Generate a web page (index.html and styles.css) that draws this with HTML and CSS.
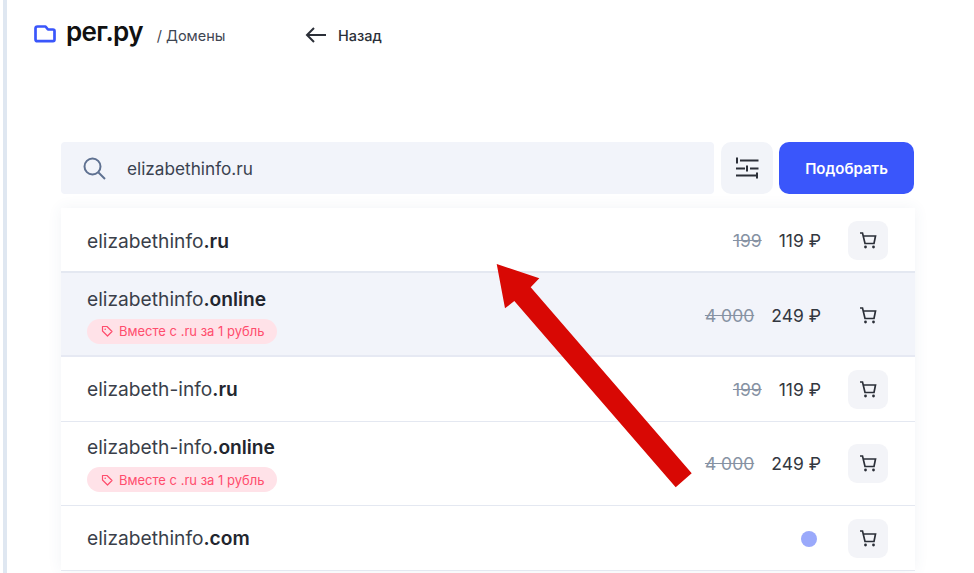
FILE: index.html
```html
<!DOCTYPE html>
<html lang="ru">
<head>
<meta charset="utf-8">
<title>рег.ру / Домены</title>
<link rel="stylesheet" href="styles.css">
</head>
<body>
<div class="page">
  <header class="header">
    <div class="brand">
      <svg class="logo-icon" viewBox="0 0 22 18" width="22" height="18" fill="none"><path d="M1.500 3.500C1.500 2.400 2.400 1.500 3.500 1.500H11.500L14 4.500H19C20 4.500 20.500 5.200 20.500 6V14.500C20.500 15.500 19.800 16.200 19 16.200H3.500C2.400 16.200 1.500 15.300 1.500 14.200Z" stroke="#3a56fb" stroke-width="2.700" stroke-linejoin="round"/></svg>
      <span class="logo-text">рег.ру</span>
      <span class="crumb">/ Домены</span>
    </div>
    <a class="back">
      <svg viewBox="0 0 22 16" width="22" height="16" fill="none"><path d="M21 8H2M9 1L2 8L9 15" stroke="#2b2f38" stroke-width="2"/></svg>
      <span>Назад</span>
    </a>
  </header>
  <main class="main">
    <div class="search-row">
      <div class="search">
        <svg viewBox="0 0 24 24" width="24" height="24" fill="none"><circle cx="10.500" cy="10.500" r="8" stroke="#5f7191" stroke-width="2"/><path d="M16.500 16.500L23 23" stroke="#5f7191" stroke-width="2"/></svg>
        <span>elizabethinfo.ru</span>
      </div>
      <button class="filter">
        <svg viewBox="0 0 23 22" width="23" height="22" fill="none" stroke="#2b2f38" stroke-width="2"><path d="M4 3.500H22.500M1 .5V6.500M0 11.500H9M11 8.500V14.500M14 11.500H22.500M0 18.500H20M21 15.500V21.500"/></svg>
      </button>
      <button class="submit">Подобрать</button>
    </div>
    <div class="list">
      <div class="row row-a first">
        <div class="name">elizabethinfo<b>.ru</b></div>
        <div class="prices"><s>199</s><span>119 ₽</span></div>
        <button class="cart"><svg viewBox="0 0 18 17" width="18" height="17" fill="none"><path d="M1 1H3.500L6 11.500H15L16.500 4H4.200" stroke="#2b2f38" stroke-width="1.700"/><circle cx="6.500" cy="15" r="1.400" fill="#2b2f38"/><circle cx="14.500" cy="15" r="1.400" fill="#2b2f38"/></svg></button>
      </div>
      <div class="row row-b hover">
        <div class="name">elizabethinfo<b>.online</b>
          <div class="tag"><svg viewBox="0 0 12 12" width="12" height="12" fill="none"><path d="M1.500 1.500H6L11 6.500L6.500 11L1.500 6Z" stroke="#ff4d6d" stroke-width="1.200" stroke-linejoin="round"/><circle cx="4.200" cy="4.200" r=".8" fill="#ff4d6d"/></svg>Вместе с .ru за 1 рубль</div>
        </div>
        <div class="prices"><s>4 000</s><span>249 ₽</span></div>
        <button class="cart"><svg viewBox="0 0 18 17" width="18" height="17" fill="none"><path d="M1 1H3.500L6 11.500H15L16.500 4H4.200" stroke="#2b2f38" stroke-width="1.700"/><circle cx="6.500" cy="15" r="1.400" fill="#2b2f38"/><circle cx="14.500" cy="15" r="1.400" fill="#2b2f38"/></svg></button>
      </div>
      <div class="row row-a">
        <div class="name">elizabeth-info<b>.ru</b></div>
        <div class="prices"><s>199</s><span>119 ₽</span></div>
        <button class="cart"><svg viewBox="0 0 18 17" width="18" height="17" fill="none"><path d="M1 1H3.500L6 11.500H15L16.500 4H4.200" stroke="#2b2f38" stroke-width="1.700"/><circle cx="6.500" cy="15" r="1.400" fill="#2b2f38"/><circle cx="14.500" cy="15" r="1.400" fill="#2b2f38"/></svg></button>
      </div>
      <div class="row row-b">
        <div class="name">elizabeth-info<b>.online</b>
          <div class="tag"><svg viewBox="0 0 12 12" width="12" height="12" fill="none"><path d="M1.500 1.500H6L11 6.500L6.500 11L1.500 6Z" stroke="#ff4d6d" stroke-width="1.200" stroke-linejoin="round"/><circle cx="4.200" cy="4.200" r=".8" fill="#ff4d6d"/></svg>Вместе с .ru за 1 рубль</div>
        </div>
        <div class="prices"><s>4 000</s><span>249 ₽</span></div>
        <button class="cart"><svg viewBox="0 0 18 17" width="18" height="17" fill="none"><path d="M1 1H3.500L6 11.500H15L16.500 4H4.200" stroke="#2b2f38" stroke-width="1.700"/><circle cx="6.500" cy="15" r="1.400" fill="#2b2f38"/><circle cx="14.500" cy="15" r="1.400" fill="#2b2f38"/></svg></button>
      </div>
      <div class="row row-a">
        <div class="name">elizabethinfo<b>.com</b></div>
        <div class="prices"><i class="loader"></i></div>
        <button class="cart"><svg viewBox="0 0 18 17" width="18" height="17" fill="none"><path d="M1 1H3.500L6 11.500H15L16.500 4H4.200" stroke="#2b2f38" stroke-width="1.700"/><circle cx="6.500" cy="15" r="1.400" fill="#2b2f38"/><circle cx="14.500" cy="15" r="1.400" fill="#2b2f38"/></svg></button>
      </div>
    </div>
  </main>
  <svg class="arrow" viewBox="0 0 974 573" width="974" height="573"><polygon points="496.700,264 539.300,278.300 530.700,287.300 691.700,473.300 675.700,487.300 514.300,301 505,308.300" fill="#d80804"/></svg>
</div>
</body>
</html>
```

FILE: styles.css
```css
* { box-sizing: border-box; }
html, body { margin: 0; height: 100%; overflow: hidden; background: #fff; }
body { font-family: Inter, "Noto Sans", sans-serif; color: #2b2f38; }
.page { position: relative; width: 974px; height: 573px; overflow: hidden; padding-left: 3px; }
.page::before { content: ""; display: block; position: absolute; left: 3px; top: 0; bottom: 0; width: 4px; background: #dfe7f1; }
.header { display: flex; align-items: center; height: 70px; padding-left: 31px; }
.brand { display: flex; align-items: center; width: 271px; }
.logo-icon { margin-right: 10px; margin-bottom: 3px; }
.logo-text { font-size: 26px; font-weight: 600; color: #111; letter-spacing: -0.7px; margin-right: 14px; padding-bottom: 6px; line-height: 1; }
.crumb { font-size: 14.500px; color: #3f4652; }
.back { display: flex; align-items: center; gap: 11px; font-size: 14.500px; color: #2b2f38; font-weight: 500; }
.main { padding: 72px 60px 0 58px; }
.search-row { display: flex; gap: 6px; height: 52px; margin-bottom: 14px; }
.search { flex: 1; display: flex; align-items: center; gap: 21px; padding-left: 21px; margin-right: 1px; background: #f2f4fa; border-radius: 4px; font-size: 17.200px; color: #3a4250; }
.filter { width: 52px; height: 52px; border: 0; padding: 0; display: flex; align-items: center; justify-content: center; background: #f2f4f9; border-radius: 10px; }
.submit { width: 135px; height: 52px; border: 0; background: #3a56fb; color: #fff; border-radius: 10px; font: 600 15px Inter, sans-serif; }
.list { width: 854px; box-shadow: 0 0 14px rgba(60, 80, 130, .07); }
.row { display: flex; align-items: center; padding: 0 27px 0 26px; background: #fff; border-bottom: 1px solid #e4e8f1; }
.row-a { height: 65px; }
.row-b { height: 84px; }
.first { padding-top: 2px; border-bottom-width: 2px; }
.hover { background: #f2f4fa; padding-top: 2px; border-bottom: 2px solid #e6e9f3; }
.name { flex: 1; font-size: 19.200px; color: #3a3f4a; }
.name b { font-weight: 600; color: #22262e; }
.tag { display: flex; align-items: center; gap: 6px; width: 190px; height: 25px; margin-top: 8px; padding-left: 14px; border-radius: 13px; background: #ffe2e8; color: #ff4d6d; font-size: 13px; font-weight: 400; }
.prices { display: flex; align-items: center; gap: 17px; font-size: 17.500px; margin-right: 27px; }
.prices s { color: #8692a3; }
.prices span { color: #33373f; }
.loader { display: block; width: 16px; height: 16px; border-radius: 50%; background: #9aa9fb; margin: 2px 4px 0 0; }
.cart { width: 40px; height: 39px; border: 0; padding: 0; display: flex; align-items: center; justify-content: center; background: #f3f4f8; border-radius: 9px; }
.hover .cart { background: transparent; }
.arrow { position: absolute; left: 0; top: 0; pointer-events: none; }
```
